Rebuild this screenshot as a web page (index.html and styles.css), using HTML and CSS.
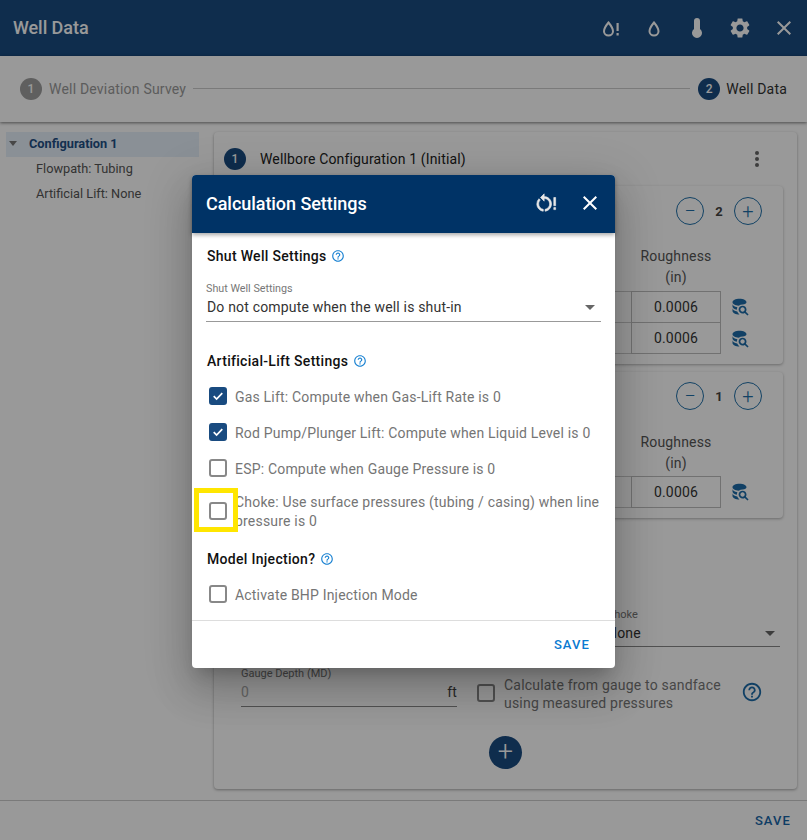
FILE: index.html
```html
<!DOCTYPE html>
<html lang="en">
<head>
<meta charset="utf-8">
<title>Well Data</title>
<link rel="stylesheet" href="styles.css">
</head>
<body>
<div class="app">
  <header class="topbar">
    <div class="topbar-title">Well Data</div>
    <div class="topbar-icons">
      <svg class="ico" viewBox="0 0 24 24"><path class="drop" d="M9.500 19.500C7 19.500 5 17.600 5 15.200C5 12 9.500 6.500 9.500 6.500C9.500 6.500 14 12 14 15.200C14 17.600 12 19.500 9.500 19.500Z"/><path class="fillw" d="M17.500 7h2.200v8h-2.200zM17.500 17h2.200v2.400h-2.200z"/></svg>
      <svg class="ico" viewBox="0 0 24 24"><path class="drop" d="M12 19.500C9.500 19.500 7.500 17.600 7.500 15.200C7.500 12 12 6.500 12 6.500C12 6.500 16.500 12 16.500 15.200C16.500 17.600 14.500 19.500 12 19.500Z"/></svg>
      <svg class="ico" viewBox="0 0 24 24"><path class="fillw" d="M15 13V5A3 3 0 0 0 9 5V13A5 5 0 1 0 15 13Z"/></svg>
      <svg class="ico" viewBox="0 0 24 24"><path class="fillw" d="M19.140 12.940c.04-.3.06-.61.06-.94 0-.32-.02-.64-.07-.94l2.030-1.580c.18-.14.23-.41.12-.61l-1.920-3.320c-.12-.22-.37-.29-.59-.22l-2.390.96c-.5-.38-1.030-.7-1.620-.94l-.36-2.540c-.04-.24-.24-.41-.48-.41h-3.840c-.24 0-.43.17-.47.41l-.36 2.540c-.59.24-1.130.57-1.620.94l-2.390-.96c-.22-.08-.47 0-.59.22L2.740 8.870c-.12.21-.08.47.12.61l2.030 1.580c-.05.3-.09.63-.09.94s.02.64.07.94l-2.030 1.580c-.18.14-.23.41-.12.61l1.920 3.320c.12.22.37.29.59.22l2.390-.96c.5.38 1.030.7 1.620.94l.36 2.540c.05.24.24.41.48.41h3.840c.24 0 .44-.17.47-.41l.36-2.540c.59-.24 1.130-.56 1.620-.94l2.390.96c.22.08.47 0 .59-.22l1.920-3.320c.12-.22.07-.47-.12-.61l-2.010-1.580zM12 15.600c-1.980 0-3.600-1.620-3.600-3.600s1.620-3.600 3.600-3.600 3.600 1.620 3.600 3.600-1.620 3.600-3.600 3.600z"/></svg>
      <svg class="ico" viewBox="0 0 24 24"><path class="fillw" d="M19 6.410L17.590 5 12 10.590 6.410 5 5 6.410 10.590 12 5 17.590 6.410 19 12 13.410 17.590 19 19 17.590 13.410 12z"/></svg>
    </div>
  </header>

  <nav class="stepper">
    <span class="step-num step-num-off">1</span>
    <span class="step-label step-label-off">Well Deviation Survey</span>
    <span class="step-line"></span>
    <span class="step-num">2</span>
    <span class="step-label">Well Data</span>
  </nav>

  <main class="main">
    <aside class="tree">
      <div class="tree-head"><span class="tree-caret"></span>Configuration 1</div>
      <div class="tree-item">Flowpath: Tubing</div>
      <div class="tree-item">Artificial Lift: None</div>
    </aside>

    <section class="config">
      <div class="config-head">
        <span class="step-num">1</span>
        <span class="config-title">Wellbore Configuration 1 (Initial)</span>
        <span class="kebab"><i></i><i></i><i></i></span>
      </div>

      <div class="sub sub-a">
        <div class="counter">
          <span class="round">&#8722;</span><b class="count">2</b><span class="round">+</span>
        </div>
        <div class="col-head">Roughness<br>(in)</div>
        <div class="rows">
          <div class="row"><span class="cell-stub"></span><span class="cell">0.0006</span>
            <svg class="db" viewBox="0 0 24 24"><path d="M18.680 12.320C16.920 10.560 14.070 10.560 12.320 12.320C10.560 14.070 10.560 16.930 12.320 18.680C13.860 20.220 16.250 20.430 18 19.320L21.090 22.390L22.390 21.090L19.300 18C20.420 16.270 20.210 13.860 18.680 12.320M17.270 17.270C16.290 18.250 14.710 18.250 13.730 17.270C12.750 16.290 12.750 14.710 13.730 13.730C14.710 12.750 16.290 12.750 17.270 13.730C18.250 14.710 18.250 16.290 17.270 17.270M10.900 20.100C10.250 19.440 9.740 18.650 9.420 17.780C6.270 17.250 4 15.760 4 14V17C4 19.210 7.580 21 12 21V21C11.600 20.740 11.230 20.440 10.900 20.100M4 9V12C4 13.680 6.070 15.120 9 15.700C9 15.630 9 15.570 9 15.500C9 14.570 9.200 13.650 9.580 12.810C6.340 12.300 4 10.790 4 9M12 3C7.580 3 4 4.790 4 7C4 9 7 10.680 11 11H11.080C12.460 10.350 14 9.750 15.500 9.750H15.780C18.200 9.500 20 8.280 20 7C20 4.790 16.420 3 12 3Z"/></svg>
          </div>
          <div class="row"><span class="cell-stub"></span><span class="cell">0.0006</span>
            <svg class="db" viewBox="0 0 24 24"><path d="M18.680 12.320C16.920 10.560 14.070 10.560 12.320 12.320C10.560 14.070 10.560 16.930 12.320 18.680C13.860 20.220 16.250 20.430 18 19.320L21.090 22.390L22.390 21.090L19.300 18C20.420 16.270 20.210 13.860 18.680 12.320M17.270 17.270C16.290 18.250 14.710 18.250 13.730 17.270C12.750 16.290 12.750 14.710 13.730 13.730C14.710 12.750 16.290 12.750 17.270 13.730C18.250 14.710 18.250 16.290 17.270 17.270M10.900 20.100C10.250 19.440 9.740 18.650 9.420 17.780C6.270 17.250 4 15.760 4 14V17C4 19.210 7.580 21 12 21V21C11.600 20.740 11.230 20.440 10.900 20.100M4 9V12C4 13.680 6.070 15.120 9 15.700C9 15.630 9 15.570 9 15.500C9 14.570 9.200 13.650 9.580 12.810C6.340 12.300 4 10.790 4 9M12 3C7.580 3 4 4.790 4 7C4 9 7 10.680 11 11H11.080C12.460 10.350 14 9.750 15.500 9.750H15.780C18.200 9.500 20 8.280 20 7C20 4.790 16.420 3 12 3Z"/></svg>
          </div>
        </div>
      </div>

      <div class="sub sub-b">
        <div class="counter">
          <span class="round">&#8722;</span><b class="count">1</b><span class="round">+</span>
        </div>
        <div class="col-head">Roughness<br>(in)</div>
        <div class="rows">
          <div class="row"><span class="cell-stub"></span><span class="cell">0.0006</span>
            <svg class="db" viewBox="0 0 24 24"><path d="M18.680 12.320C16.920 10.560 14.070 10.560 12.320 12.320C10.560 14.070 10.560 16.930 12.320 18.680C13.860 20.220 16.250 20.430 18 19.320L21.090 22.390L22.390 21.090L19.300 18C20.420 16.270 20.210 13.860 18.680 12.320M17.270 17.270C16.290 18.250 14.710 18.250 13.730 17.270C12.750 16.290 12.750 14.710 13.730 13.730C14.710 12.750 16.290 12.750 17.270 13.730C18.250 14.710 18.250 16.290 17.270 17.270M10.900 20.100C10.250 19.440 9.740 18.650 9.420 17.780C6.270 17.250 4 15.760 4 14V17C4 19.210 7.580 21 12 21V21C11.600 20.740 11.230 20.440 10.900 20.100M4 9V12C4 13.680 6.070 15.120 9 15.700C9 15.630 9 15.570 9 15.500C9 14.570 9.200 13.650 9.580 12.810C6.340 12.300 4 10.790 4 9M12 3C7.580 3 4 4.790 4 7C4 9 7 10.680 11 11H11.080C12.460 10.350 14 9.750 15.500 9.750H15.780C18.200 9.500 20 8.280 20 7C20 4.790 16.420 3 12 3Z"/></svg>
          </div>
        </div>
      </div>

      <div class="choke-row">
        <div class="field field-choke">
          <span class="field-label">Choke</span>
          <div class="field-value">None<span class="caret"></span></div>
        </div>
      </div>

      <div class="gauge-row">
        <div class="field field-gauge">
          <span class="field-label">Gauge Depth (MD)</span>
          <div class="field-value"><span class="muted">0</span><span class="unit">ft</span></div>
        </div>
        <span class="box box-back"></span>
        <div class="gauge-text">Calculate from gauge to sandface using measured pressures</div>
        <svg class="help-back" viewBox="0 0 24 24"><path d="M11 18h2v-2h-2v2zm1-16C6.480 2 2 6.480 2 12s4.480 10 10 10 10-4.480 10-10S17.520 2 12 2zm0 18c-4.410 0-8-3.590-8-8s3.590-8 8-8 8 3.590 8 8-3.590 8-8 8zm0-14c-2.210 0-4 1.790-4 4h2c0-1.100.9-2 2-2s2 .9 2 2c0 2-3 1.750-3 5h2c0-2.250 3-2.500 3-5 0-2.210-1.790-4-4-4z"/></svg>
      </div>

      <div class="add-row"><span class="add">+</span></div>
    </section>
  </main>

  <footer class="footer"><span class="save save-back">SAVE</span></footer>

  <div class="backdrop"></div>

  <div class="dialog" role="dialog">
    <div class="dialog-head">
      <div class="dialog-title">Calculation Settings</div>
      <svg class="dicon dicon-reset" viewBox="0 0 28 24"><path d="M12 5V2L8 6l4 4V7c3.310 0 6 2.690 6 6 0 2.970-2.170 5.430-5 5.910v2.020c3.950-.49 7-3.850 7-7.930 0-4.420-3.580-8-8-8zm-6 8c0-1.650.67-3.150 1.760-4.240L6.340 7.340A7.930 7.930 0 004 13c0 4.080 3.050 7.440 7 7.930v-2.020c-2.830-.48-5-2.940-5-5.910z"/><path d="M22.500 6h2v9h-2zM22.500 17h2v2.200h-2z"/></svg>
      <svg class="dicon dicon-close" viewBox="0 0 24 24"><path d="M19 6.410L17.590 5 12 10.590 6.410 5 5 6.410 10.590 12 5 17.590 6.410 19 12 13.410 17.590 19 19 17.590 13.410 12z"/></svg>
    </div>
    <div class="dialog-body">
      <div class="sec sec-1">Shut Well Settings <svg class="help" viewBox="0 0 24 24"><path d="M11 18h2v-2h-2v2zm1-16C6.480 2 2 6.480 2 12s4.480 10 10 10 10-4.480 10-10S17.520 2 12 2zm0 18c-4.410 0-8-3.590-8-8s3.590-8 8-8 8 3.590 8 8-3.590 8-8 8zm0-14c-2.210 0-4 1.790-4 4h2c0-1.100.9-2 2-2s2 .9 2 2c0 2-3 1.750-3 5h2c0-2.250 3-2.500 3-5 0-2.210-1.790-4-4-4z"/></svg></div>
      <div class="select">
        <span class="select-label">Shut Well Settings</span>
        <div class="select-value">Do not compute when the well is shut-in<span class="caret caret-d"></span></div>
      </div>
      <div class="sec sec-2">Artificial-Lift Settings <svg class="help" viewBox="0 0 24 24"><path d="M11 18h2v-2h-2v2zm1-16C6.480 2 2 6.480 2 12s4.480 10 10 10 10-4.480 10-10S17.520 2 12 2zm0 18c-4.410 0-8-3.590-8-8s3.590-8 8-8 8 3.590 8 8-3.590 8-8 8zm0-14c-2.210 0-4 1.790-4 4h2c0-1.100.9-2 2-2s2 .9 2 2c0 2-3 1.750-3 5h2c0-2.250 3-2.500 3-5 0-2.210-1.790-4-4-4z"/></svg></div>
      <label class="chk"><span class="box box-on"><svg viewBox="0 0 18 18"><path d="M3.500 9.200l3.700 3.700 7.300-7.600" /></svg></span>Gas Lift: Compute when Gas-Lift Rate is 0</label>
      <label class="chk"><span class="box box-on"><svg viewBox="0 0 18 18"><path d="M3.500 9.200l3.700 3.700 7.300-7.600" /></svg></span>Rod Pump/Plunger Lift: Compute when Liquid Level is 0</label>
      <label class="chk"><span class="box"></span>ESP: Compute when Gauge Pressure is 0</label>
      <label class="chk chk-two"><span class="box"></span><span>Choke: Use surface pressures (tubing / casing) when line pressure is 0</span><span class="mark"></span></label>
      <div class="sec sec-3">Model Injection? <svg class="help" viewBox="0 0 24 24"><path d="M11 18h2v-2h-2v2zm1-16C6.480 2 2 6.480 2 12s4.480 10 10 10 10-4.480 10-10S17.520 2 12 2zm0 18c-4.410 0-8-3.590-8-8s3.590-8 8-8 8 3.590 8 8-3.590 8-8 8zm0-14c-2.210 0-4 1.790-4 4h2c0-1.100.9-2 2-2s2 .9 2 2c0 2-3 1.750-3 5h2c0-2.250 3-2.500 3-5 0-2.210-1.790-4-4-4z"/></svg></div>
      <label class="chk chk-last"><span class="box"></span>Activate BHP Injection Mode</label>
    </div>
    <div class="dialog-foot"><span class="save">SAVE</span></div>
  </div>
</div>
</body>
</html>
```

FILE: styles.css
```css
* { box-sizing: border-box; }
html, body { margin: 0; padding: 0; }
body { font-family: Roboto, "Liberation Sans", sans-serif; font-size: 14px; color: #333; background: #fff; }

.app { position: relative; width: 807px; height: 840px; overflow: hidden; display: flex; flex-direction: column; background: #fff; }

.topbar { height: 56px; flex: none; display: flex; align-items: center; justify-content: space-between; background: #194b80; color: #fff; padding: 0 11px 2px 13px; }
.topbar-title { font-size: 18px; font-weight: 500; letter-spacing: -.05px; }
.topbar-icons { display: flex; gap: 19px; margin-top: 2px; }
.ico { width: 24px; height: 24px; display: block; }
.ico:nth-child(5) { margin-left: 1px; }
.fillw { fill: #fff; }
.drop { fill: none; stroke: #fff; stroke-width: 2; }

.stepper { height: 66px; flex: none; display: flex; align-items: center; padding: 0 20px; box-shadow: 0 1px 3px rgba(0,0,0,.5); position: relative; }
.step-num { width: 22px; height: 22px; flex: none; border-radius: 50%; background: #194b80; color: #fff; font-size: 12px; font-weight: 500; display: flex; align-items: center; justify-content: center; }
.step-num-off { background: #9e9e9e; }
.step-label { margin-left: 6px; font-size: 14px; letter-spacing: .2px; color: #333; }
.step-label-off { margin-left: 7px; color: #9a9a9a; }
.step-line { flex: 1; height: 1px; margin: -2px 8px 0 7px; background: #ccc; }

.main { flex: 1; min-height: 0; display: flex; }
.tree { width: 214px; flex: none; padding: 10px 15px 0 6px; font-size: 12.750px; color: #555; }
.tree-head { height: 25px; background: #e6f0fb; color: #1f4f84; font-weight: 700; display: flex; align-items: center; padding: 0 0 2px 23px; position: relative; }
.tree-caret { position: absolute; left: 3px; top: 9px; border: 4.500px solid transparent; border-top: 5px solid #777; border-bottom: 0; }
.tree-item { height: 25px; padding-left: 30px; line-height: 23px; }

.config { flex: 1; margin: 10px 10px 11px 0; border-radius: 4px; box-shadow: 0 1px 3px rgba(0,0,0,.35); background: #fff; padding: 0 14px 0 11px; }
.config-head { height: 54px; display: flex; align-items: center; margin-left: -1px; }
.config-title { margin-left: 14px; font-size: 14px; letter-spacing: .15px; color: #222; }
.kebab { margin-left: auto; margin-right: 24px; display: flex; flex-direction: column; gap: 2px; }
.kebab i { width: 4px; height: 4px; border-radius: 50%; background: #666; display: block; }

.sub { border-radius: 4px; box-shadow: 0 1px 3px rgba(0,0,0,.3); background: #fff; padding: 11px 0 0; display: flex; flex-direction: column; align-items: flex-end; }
.sub-a { height: 178px; }
.sub-b { height: 146px; margin-top: 8px; padding-top: 10px; }
.counter { display: flex; align-items: center; padding-right: 21px; height: 28px; }
.round { width: 28px; height: 28px; border-radius: 50%; border: 1px solid #1f6fa8; color: #1f6fa8; display: flex; align-items: center; justify-content: center; font-size: 20px; font-weight: 300; line-height: 1; }
.count { width: 30px; text-align: center; font-size: 13px; font-weight: 700; color: #444; }
.col-head { width: 90px; margin-right: 62px; margin-top: 21px; text-align: center; font-size: 14px; line-height: 21px; color: #555; letter-spacing: .15px; }
.sub-b .col-head { margin-top: 22px; }
.rows { margin-top: 3px; }
.sub-b .rows { margin-top: 2px; }
.row { display: flex; align-items: center; height: 31.500px; }
.cell-stub { width: 30px; height: 100%; border: 1px solid #ccc; border-right: 0; }
.row + .row .cell-stub, .row + .row .cell { border-top: 0; }
.cell { width: 90px; height: 100%; border: 1px solid #bdbdbd; display: flex; align-items: center; justify-content: center; font-size: 14px; letter-spacing: .2px; color: #333; }
.db { width: 21px; height: 21px; margin: 0 33px 0 8px; fill: #1d6ca8; flex: none; }

.choke-row { display: flex; justify-content: flex-end; margin-top: 89px; }
.field { border-bottom: 1px solid #888; position: relative; }
.field-choke { width: 173px; margin-right: 3px; height: 40px; }
.field-label { display: block; font-size: 11px; line-height: 14px; padding-top: 1px; box-sizing: content-box; color: #777; }
.field-value { display: flex; align-items: center; justify-content: space-between; font-size: 14px; letter-spacing: .2px; height: 22px; color: #333; }
.caret { width: 0; height: 0; border: 5px solid transparent; border-top: 5px solid #666; border-bottom: 0; margin-right: 5px; }
.gauge-row { display: flex; margin-top: 19px; align-items: flex-start; }
.field-gauge { width: 216px; margin-left: 16px; height: 41px; }
.muted { color: #aaa; }
.unit { color: #444; }
.box { width: 18px; height: 18px; flex: none; border: 2px solid #888; border-radius: 3px; display: block; background: transparent; }
.box-back { margin: 18px 0 0 20px; }
.gauge-text { width: 226px; margin: 10px 0 0 9px; line-height: 18px; font-size: 14px; letter-spacing: .2px; color: #777; }
.help-back { width: 22px; height: 22px; margin: 15px 0 0 11px; fill: #1d6ca8; }
.add-row { display: flex; justify-content: center; margin-top: 24px; padding-left: 3px; }
.add { width: 33px; height: 33px; border-radius: 50%; background: #194b80; color: #fff; display: flex; align-items: center; justify-content: center; font-size: 27px; font-weight: 300; line-height: 1; }

.footer { height: 40px; flex: none; border-top: 1px solid #ccc; display: flex; align-items: center; justify-content: flex-end; padding: 0 16px; }
.save { font-size: 13px; font-weight: 500; letter-spacing: 1.100px; color: #0a7ad1; }
.save-back { color: #1766a8; }

.backdrop { position: absolute; inset: 0; background: rgba(0,0,0,.4); }

.dialog { position: absolute; left: 192px; top: 175px; width: 423px; height: 493px; background: #fff; border-radius: 4px; box-shadow: 0 11px 15px -7px rgba(0,0,0,.2), 0 24px 38px 3px rgba(0,0,0,.14), 0 9px 46px 8px rgba(0,0,0,.12); display: flex; flex-direction: column; color: #000; }
.dialog-head { height: 58px; flex: none; background: #003366; border-radius: 4px 4px 0 0; display: flex; align-items: center; padding: 0 14px; box-shadow: 0 2px 4px rgba(0,0,0,.35); color: #fff; }
.dialog-title { font-size: 18px; font-weight: 500; flex: 1; padding-bottom: 2px; letter-spacing: -.05px; }
.dicon { fill: #e8e8e8; display: block; }
.dicon-reset { width: 26px; height: 22px; margin: -2px 19px 0 0; stroke: #e8e8e8; stroke-width: .7; }
.dicon-close { width: 24px; height: 24px; margin: -2px -1px 0 0; fill: #fff; }

.dialog-body { flex: 1; padding: 13px 14px 0; }
.sec { height: 20px; display: flex; align-items: center; padding-left: 1px; font-size: 14px; font-weight: 500; letter-spacing: .3px; color: #111; white-space: pre; }
.help { width: 14px; height: 14px; fill: #1a82d2; margin-left: 1px; }
.sec-2 { margin-top: 29px; }
.sec-3 { margin-top: 19px; }
.select { margin-top: 16px; height: 40px; border-bottom: 1px solid #999; }
.select-label { display: block; font-size: 10.750px; line-height: 13px; color: #777; }
.select-value { display: flex; align-items: center; justify-content: space-between; height: 22px; margin-top: 1px; padding-left: 1px; font-size: 14px; letter-spacing: .18px; color: #333; }
.caret-d { margin-right: 6px; }

.chk { display: flex; align-items: center; height: 36px; padding: 2px 0 0 3px; gap: 8px; font-size: 14px; letter-spacing: .19px; color: #757575; position: relative; }
.chk .box { margin-top: -2px; }
.sec-2 + .chk { margin-top: 7px; }
.chk-two { height: 38px; margin-top: 6px; line-height: 19px; }
.chk-last { margin-top: 7px; }
.box-on { background: #194b80; border-color: #194b80; }
.box-on svg { display: block; width: 14px; height: 14px; fill: none; stroke: #fff; stroke-width: 2.200; }
.mark { position: absolute; left: -12px; top: -4px; width: 44px; height: 44px; border: 5px solid #ffe600; }

.dialog-foot { height: 48px; flex: none; border-top: 1px solid #ddd; display: flex; align-items: center; justify-content: flex-end; padding-right: 25px; }
```
